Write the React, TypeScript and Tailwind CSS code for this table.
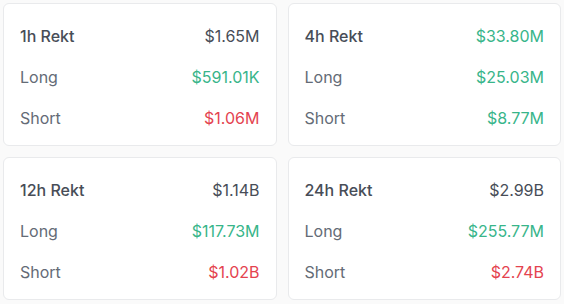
import React from "react";

type Card = {
  title: string;
  total: string;
  totalColor: "dark" | "green";
  long: string;
  short: string;
  shortColor: "green" | "red";
};

const cards: Card[] = [
  { title: "1h Rekt", total: "$1.65M", totalColor: "dark", long: "$591.01K", short: "$1.06M", shortColor: "red" },
  { title: "4h Rekt", total: "$33.80M", totalColor: "green", long: "$25.03M", short: "$8.77M", shortColor: "green" },
  { title: "12h Rekt", total: "$1.14B", totalColor: "dark", long: "$117.73M", short: "$1.02B", shortColor: "red" },
  { title: "24h Rekt", total: "$2.99B", totalColor: "dark", long: "$255.77M", short: "$2.74B", shortColor: "red" },
];

export default function App() {
  return (
    <div
      className="w-[564px] h-[304px] bg-[#fafafa] p-[3px] grid grid-cols-2 gap-[11px] content-start"
      style={{ fontFamily: "Inter, 'Noto Sans', sans-serif" }}
    >
      {cards.map((c) => (
        <div
          key={c.title}
          className="h-[143px] bg-white border border-[#e9eaec] rounded-[6px] px-4 pt-[20px] pb-[15px] flex flex-col gap-[17px] text-[16px] leading-6"
        >
          <div className="flex justify-between">
            <span className="font-medium text-[#474d57]">{c.title}</span>
            <span className={c.totalColor === "green" ? "text-[#38b58a]" : "text-[#474d57]"}>{c.total}</span>
          </div>
          <div className="flex justify-between">
            <span className="text-[#646b76]">Long</span>
            <span className="text-[#38b58a]">{c.long}</span>
          </div>
          <div className="flex justify-between">
            <span className="text-[#646b76]">Short</span>
            <span className={c.shortColor === "green" ? "text-[#38b58a]" : "text-[#e4434f]"}>{c.short}</span>
          </div>
        </div>
      ))}
    </div>
  );
}
